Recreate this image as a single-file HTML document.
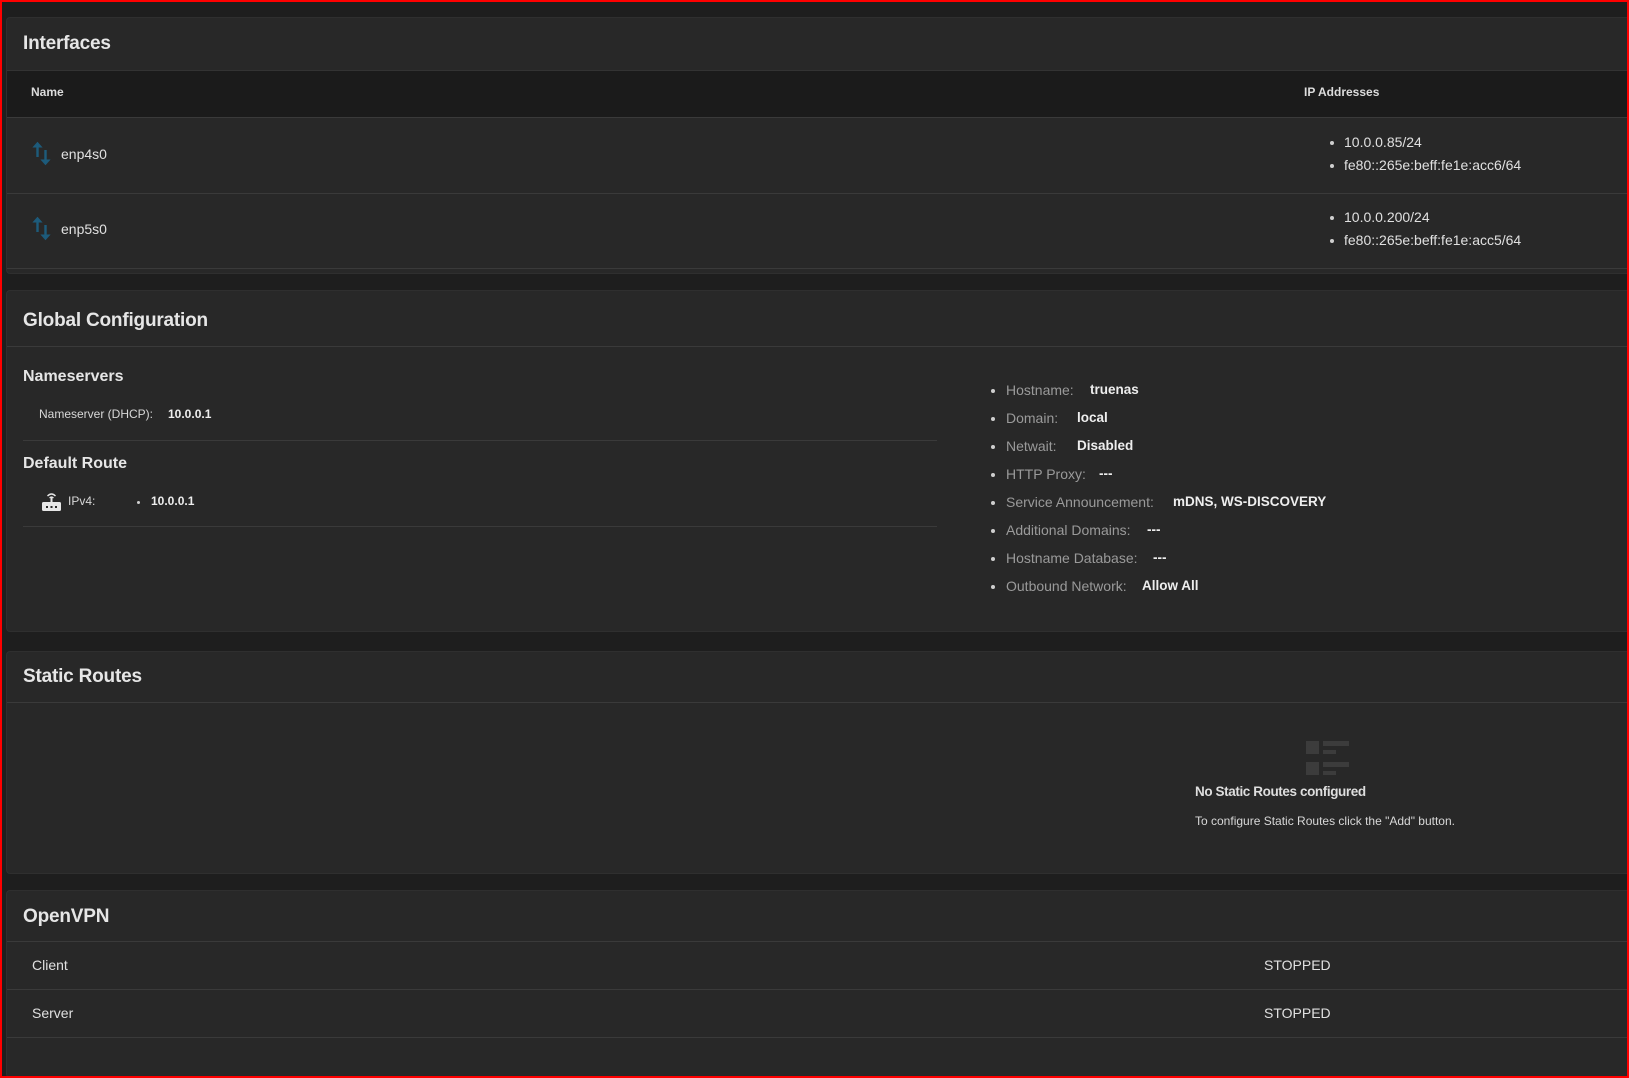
<!DOCTYPE html>
<html><head><meta charset="utf-8"><style>
*{margin:0;padding:0;box-sizing:border-box}
html,body{width:1629px;height:1078px;overflow:hidden;background:#1e1e1e;font-family:"Liberation Sans",sans-serif;color:#e0e0e0}
.frame{position:absolute;left:0;top:0;width:1629px;height:1078px;border:2px solid #ff0000;z-index:10;pointer-events:none}
.card{position:absolute;left:6px;right:0;background:#282828;border:1px solid #2f2f2f;border-right:none;border-radius:4px 0 0 4px;overflow:hidden}
.t{position:absolute;white-space:nowrap}
.title{font-weight:bold;font-size:19px;color:#e6e6e6;left:16px;letter-spacing:-0.2px}
.hr{position:absolute;height:1px;background:#3a3a3a}
.lbl{color:#9a9a9a;font-size:14px}
.val{color:#eeeeee;font-size:13.5px;font-weight:bold}
.dot{position:absolute;width:4px;height:4px;border-radius:2px;background:#cfcfcf}
</style></head><body>
<div class="frame"></div>

<!-- Interfaces -->
<div class="card" style="top:17px;height:257px">
  <div class="t title" style="top:15px">Interfaces</div>
  <div style="position:absolute;left:0;right:0;top:52px;height:48px;background:#1b1b1b;border-top:1px solid #333;border-bottom:1px solid #3a3a3a"></div>
  <div class="t" style="left:24px;top:67px;font-size:12px;font-weight:bold;color:#dcdcdc">Name</div>
  <div class="t" style="left:1297px;top:67px;font-size:12px;font-weight:bold;color:#dcdcdc">IP Addresses</div>
  <div class="hr" style="left:0;right:0;top:175px"></div>
  <div class="hr" style="left:0;right:0;top:250px"></div>
</div>
<svg style="position:absolute;left:30px;top:140px" width="22" height="28">
 <g stroke="#1d5b7b" stroke-width="2.4" fill="#1d5b7b">
  <line x1="7.5" y1="5" x2="7.5" y2="17"/><path d="M3.5 7 L7.5 2.5 L11.5 7Z" stroke-width="1"/>
  <line x1="15.5" y1="10" x2="15.5" y2="22"/><path d="M11.5 20 L15.5 24.5 L19.5 20Z" stroke-width="1"/>
 </g></svg>
<div class="t" style="left:61px;top:146px;font-size:14px">enp4s0</div>
<svg style="position:absolute;left:30px;top:215px" width="22" height="28">
 <g stroke="#1d5b7b" stroke-width="2.4" fill="#1d5b7b">
  <line x1="7.5" y1="5" x2="7.5" y2="17"/><path d="M3.5 7 L7.5 2.5 L11.5 7Z" stroke-width="1"/>
  <line x1="15.5" y1="10" x2="15.5" y2="22"/><path d="M11.5 20 L15.5 24.5 L19.5 20Z" stroke-width="1"/>
 </g></svg>
<div class="t" style="left:61px;top:221px;font-size:14px">enp5s0</div>
<div class="dot" style="left:1330px;top:141px"></div><div class="t" style="left:1344px;top:134px;font-size:14px">10.0.0.85/24</div>
<div class="dot" style="left:1330px;top:164px"></div><div class="t" style="left:1344px;top:157px;font-size:14px">fe80::265e:beff:fe1e:acc6/64</div>
<div class="dot" style="left:1330px;top:216px"></div><div class="t" style="left:1344px;top:209px;font-size:14px">10.0.0.200/24</div>
<div class="dot" style="left:1330px;top:239px"></div><div class="t" style="left:1344px;top:232px;font-size:14px">fe80::265e:beff:fe1e:acc5/64</div>

<!-- Global Configuration -->
<div class="card" style="top:290px;height:342px">
  <div class="t title" style="top:19px">Global Configuration</div>
  <div class="hr" style="left:0;right:0;top:55px"></div>
  <div class="t" style="left:16px;top:77px;font-size:16px;font-weight:bold;color:#e6e6e6">Nameservers</div>
  <div class="t" style="left:32px;top:116px;font-size:12px;color:#d8d8d8">Nameserver (DHCP):</div>
  <div class="t" style="left:161px;top:116px;font-size:12px;font-weight:bold;color:#eee">10.0.0.1</div>
  <div class="hr" style="left:16px;width:914px;top:149px"></div>
  <div class="t" style="left:16px;top:164px;font-size:16px;font-weight:bold;color:#e6e6e6">Default Route</div>
  <svg style="position:absolute;left:34px;top:200px" width="22" height="22">
    <rect x="1" y="11" width="19" height="9" rx="1.5" fill="#e6e6e6"/>
    <rect x="9.5" y="6" width="2" height="6" fill="#e6e6e6"/>
    <path d="M6.5 5 Q10.5 1 14.5 5" stroke="#e6e6e6" stroke-width="1.4" fill="none"/>
    <path d="M8.5 7 Q10.5 5 12.5 7" stroke="#e6e6e6" stroke-width="1.2" fill="none"/>
    <rect x="5" y="15" width="2" height="2" fill="#282828"/><rect x="9.5" y="15" width="2" height="2" fill="#282828"/><rect x="14" y="15" width="2" height="2" fill="#282828"/>
  </svg>
  <div class="t" style="left:61px;top:203px;font-size:12px;color:#d8d8d8">IPv4:</div>
  <div class="dot" style="left:130px;top:210px;width:3px;height:3px"></div>
  <div class="t" style="left:144px;top:203px;font-size:12px;font-weight:bold;color:#eee">10.0.0.1</div>
  <div class="hr" style="left:16px;width:914px;top:235px"></div>
</div>
<div class="dot" style="left:991px;top:389px"></div><div class="t lbl" style="left:1006px;top:382px">Hostname:</div><div class="t val" style="left:1090px;top:382px">truenas</div>
<div class="dot" style="left:991px;top:417px"></div><div class="t lbl" style="left:1006px;top:410px">Domain:</div><div class="t val" style="left:1077px;top:410px">local</div>
<div class="dot" style="left:991px;top:445px"></div><div class="t lbl" style="left:1006px;top:438px">Netwait:</div><div class="t val" style="left:1077px;top:438px">Disabled</div>
<div class="dot" style="left:991px;top:473px"></div><div class="t lbl" style="left:1006px;top:466px">HTTP Proxy:</div><div class="t val" style="left:1099px;top:466px">---</div>
<div class="dot" style="left:991px;top:501px"></div><div class="t lbl" style="left:1006px;top:494px">Service Announcement:</div><div class="t val" style="left:1173px;top:494px">mDNS, WS-DISCOVERY</div>
<div class="dot" style="left:991px;top:529px"></div><div class="t lbl" style="left:1006px;top:522px">Additional Domains:</div><div class="t val" style="left:1147px;top:522px">---</div>
<div class="dot" style="left:991px;top:557px"></div><div class="t lbl" style="left:1006px;top:550px">Hostname Database:</div><div class="t val" style="left:1153px;top:550px">---</div>
<div class="dot" style="left:991px;top:585px"></div><div class="t lbl" style="left:1006px;top:578px">Outbound Network:</div><div class="t val" style="left:1142px;top:578px">Allow All</div>

<!-- Static Routes -->
<div class="card" style="top:651px;height:223px">
  <div class="t title" style="top:14px">Static Routes</div>
  <div class="hr" style="left:0;right:0;top:50px"></div>
</div>
<svg style="position:absolute;left:1306px;top:741px" width="44" height="35">
  <rect x="0" y="0" width="13" height="13" fill="#3c3c3c"/>
  <rect x="17" y="0" width="26" height="5" fill="#3c3c3c"/>
  <rect x="17" y="9" width="13" height="4" fill="#3c3c3c"/>
  <rect x="0" y="21" width="13" height="13" fill="#3c3c3c"/>
  <rect x="17" y="21" width="26" height="5" fill="#3c3c3c"/>
  <rect x="17" y="30" width="13" height="4" fill="#3c3c3c"/>
</svg>
<div class="t" style="left:1195px;top:784px;font-size:13.5px;font-weight:bold;color:#dedede;letter-spacing:-0.4px">No Static Routes configured</div>
<div class="t" style="left:1195px;top:814px;font-size:12px;color:#d8d8d8">To configure Static Routes click the "Add" button.</div>

<!-- OpenVPN -->
<div class="card" style="top:890px;height:188px">
  <div class="t title" style="top:15px">OpenVPN</div>
  <div class="hr" style="left:0;right:0;top:50px"></div>
  <div class="hr" style="left:0;right:0;top:98px"></div>
  <div class="hr" style="left:0;right:0;top:146px"></div>
  <div class="t" style="left:25px;top:66px;font-size:14px">Client</div>
  <div class="t" style="left:25px;top:114px;font-size:14px">Server</div>
  <div class="t" style="left:1257px;top:66px;font-size:14px">STOPPED</div>
  <div class="t" style="left:1257px;top:114px;font-size:14px">STOPPED</div>
</div>
</body></html>
